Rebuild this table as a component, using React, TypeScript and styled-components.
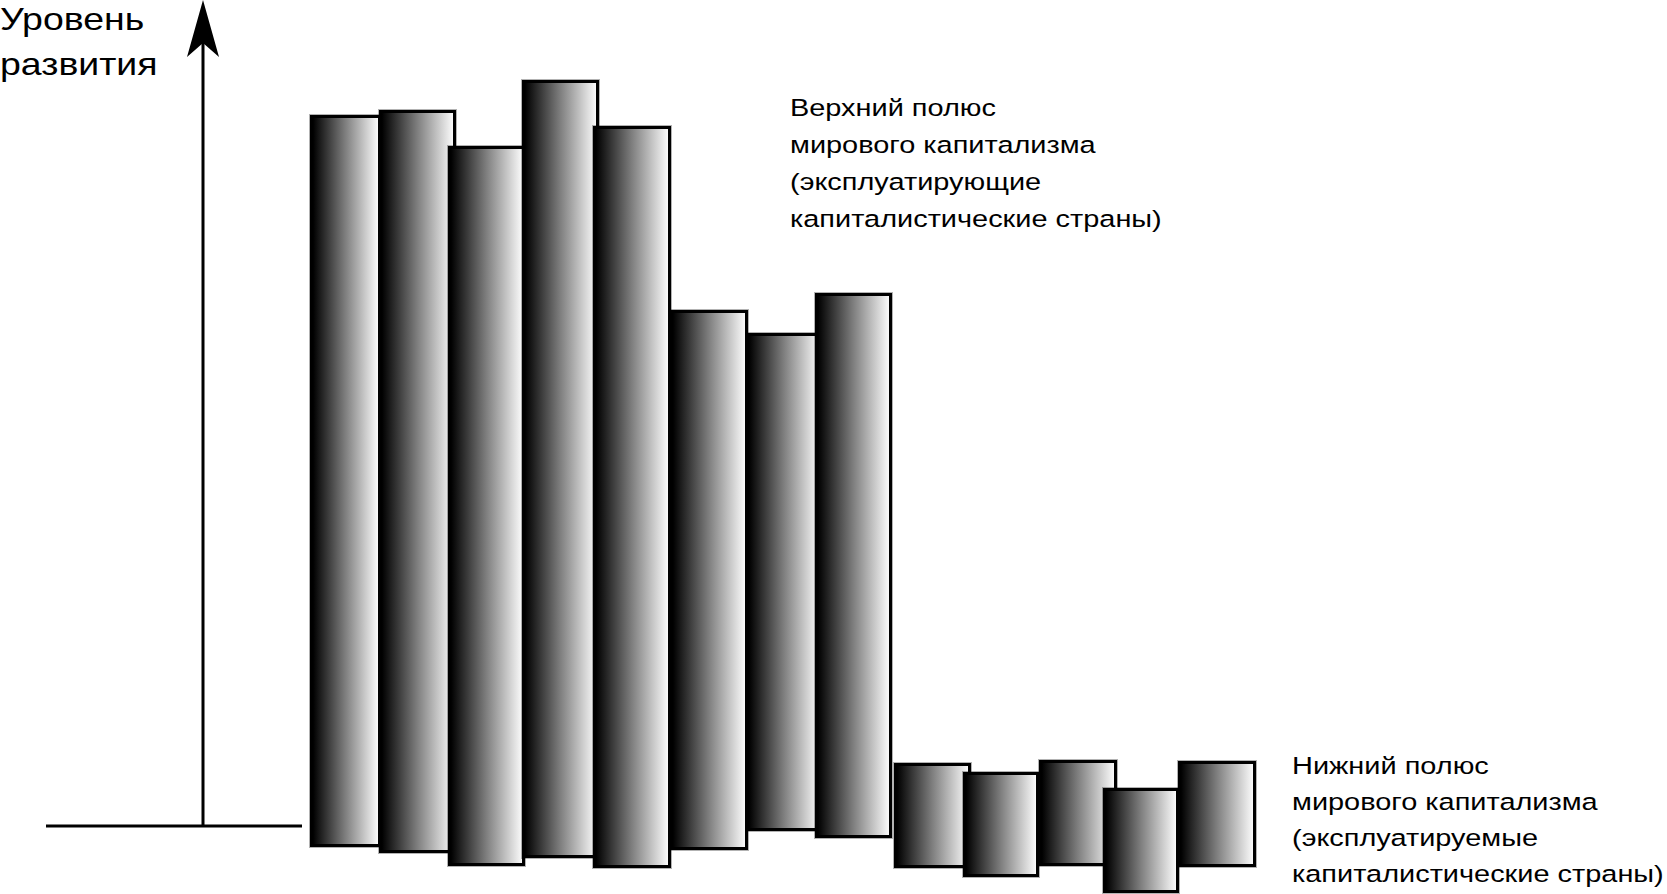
import React from "react";
import styled, { createGlobalStyle } from "styled-components";

const GlobalStyle = createGlobalStyle`
  html, body {
    margin: 0;
    padding: 0;
    background: #ffffff;
  }
  body {
    font-family: "Liberation Sans", Arial, sans-serif;
    color: #000;
  }
`;

const Canvas = styled.div`
  position: relative;
  width: 1667px;
  height: 894px;
  overflow: hidden;
  background: #fff;
`;

const AxisSvg = styled.svg`
  position: absolute;
  left: 0;
  top: 0;
  width: 1667px;
  height: 894px;
`;

const Bar = styled.div<{ $x: number; $y: number; $w: number; $h: number }>`
  position: absolute;
  box-sizing: border-box;
  left: ${(p) => p.$x}px;
  top: ${(p) => p.$y}px;
  width: ${(p) => p.$w}px;
  height: ${(p) => p.$h}px;
  border: 3px solid #000;
  box-shadow: 0 0 0 1px rgba(0, 0, 0, 0.3);
  background: linear-gradient(to right, #000 0%, #7f7f7f 50%, #fafafa 100%);
`;

const Label = styled.div<{
  $x: number;
  $y: number;
  $size: number;
  $lh: number;
  $gap: number;
  $stretch: number;
}>`
  position: absolute;
  left: ${(p) => p.$x}px;
  top: ${(p) => p.$y}px;
  display: flex;
  flex-direction: column;
  gap: ${(p) => p.$gap}px;
  font-family: "Liberation Sans", Arial, sans-serif;
  font-size: ${(p) => p.$size}px;
  line-height: ${(p) => p.$lh}px;
  white-space: nowrap;
  color: #000;
  transform: scaleX(${(p) => p.$stretch});
  transform-origin: left top;
`;

const Line = styled.div``;

const bars: [number, number, number, number][] = [
  [310, 115, 381, 847],
  [379, 110, 456, 853],
  [448, 146, 525, 866],
  [522, 80, 599, 858],
  [593, 126, 671, 868],
  [670, 310, 748, 850],
  [746, 333, 822, 831],
  [815, 293, 892, 838],
  [894, 763, 971, 868],
  [963, 772, 1039, 877],
  [1039, 760, 1117, 866],
  [1103, 788, 1179, 893],
  [1178, 761, 1256, 867],
];

export default function App() {
  return (
    <>
      <GlobalStyle />
      <Canvas>
        <AxisSvg viewBox="0 0 1667 894">
          <line x1="203" y1="40" x2="203" y2="827" stroke="#000" strokeWidth="3" />
          <line x1="46" y1="826" x2="302" y2="826" stroke="#000" strokeWidth="3" />
          <polygon points="203,0 219,57 203,43 187,57" fill="#000" />
        </AxisSvg>

        <Label $x={0} $y={2} $size={32} $lh={34} $gap={11} $stretch={1.17}>
          <Line>Уровень</Line>
          <Line>развития</Line>
        </Label>

        {bars.map(([x1, y1, x2, y2], i) => (
          <Bar key={i} $x={x1} $y={y1} $w={x2 - x1} $h={y2 - y1} />
        ))}

        <Label $x={790} $y={89} $size={24.5} $lh={37} $gap={0} $stretch={1.18}>
          <Line>Верхний полюс</Line>
          <Line>мирового капитализма</Line>
          <Line>(эксплуатирующие</Line>
          <Line>капиталистические страны)</Line>
        </Label>

        <Label $x={1292} $y={748} $size={24.5} $lh={36} $gap={0} $stretch={1.18}>
          <Line>Нижний полюс</Line>
          <Line>мирового капитализма</Line>
          <Line>(эксплуатируемые</Line>
          <Line>капиталистические страны)</Line>
        </Label>
      </Canvas>
    </>
  );
}
